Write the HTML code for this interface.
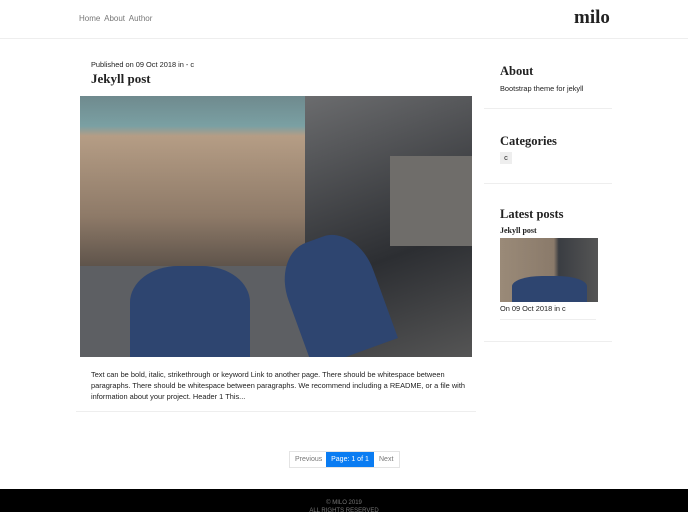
<!DOCTYPE html><html><head><style>
body{margin:0;width:688px;height:512px;overflow:hidden;background:#fff;font-family:"Liberation Sans",sans-serif;color:#222;position:relative}
.a{position:absolute}
.s{font-family:"Liberation Serif",serif;font-weight:bold}
.t{font-size:7.4px}
</style></head><body>
<div class="a t" style="left:79px;top:14px;color:#777;font-size:8px;word-spacing:2px">Home About Author</div>
<div class="a s" style="left:574px;top:7px;font-size:19px">milo</div>
<div class="a" style="left:0;top:38px;width:688px;height:1px;background:#eee"></div>
<div class="a t" style="left:91px;top:60px">Published on 09 Oct 2018 in - c</div>
<div class="a s" style="left:91px;top:71px;font-size:13px">Jekyll post</div>
<div class="a" style="left:80px;top:96px;width:392px;height:261px;overflow:hidden;background:#3a3d42">
 <div class="a" style="left:0;top:0;width:225px;height:175px;background:linear-gradient(180deg,#6f8a8e 0,#7aa0a3 30px,#b59d85 40px,#8e7a68 120px,#5a5048 175px)"></div>
 <div class="a" style="left:225px;top:0;width:167px;height:261px;background:linear-gradient(160deg,#6b6c6e,#2c2e32 60%,#555 100%)"></div>
 <div class="a" style="left:310px;top:60px;width:82px;height:90px;background:#6f6d6a"></div>
 <div class="a" style="left:0;top:170px;width:260px;height:91px;background:#5d5f63"></div>
 <div class="a" style="left:50px;top:170px;width:120px;height:91px;border-radius:40% 40% 0 0;background:#2e4570"></div>
 <div class="a" style="left:210px;top:140px;width:90px;height:121px;border-radius:40% 40% 0 0;background:#2e4570;transform:rotate(-20deg)"></div>
</div>
<div class="a t" style="left:91px;top:369px;width:380px;line-height:11px">Text can be bold, italic, strikethrough or keyword Link to another page. There should be whitespace between paragraphs. There should be whitespace between paragraphs. We recommend including a README, or a file with information about your project. Header 1 This...</div>
<div class="a" style="left:76px;top:411px;width:400px;height:1px;background:#eee"></div>
<div class="a" style="left:289px;top:451px;width:109px;height:15px;border:1px solid #e4e4e4;font-size:7px;line-height:15px">
 <span class="a" style="left:5px;color:#777">Previous</span>
 <span class="a" style="left:36px;top:0;width:48px;height:15px;background:#0a7cf2;color:#fff;text-align:center">Page: 1 of 1</span>
 <span class="a" style="left:89px;color:#777">Next</span></div>
<div class="a s" style="left:500px;top:64px;font-size:12.5px">About</div>
<div class="a t" style="left:500px;top:84px">Bootstrap theme for jekyll</div>
<div class="a" style="left:484px;top:108px;width:128px;height:1px;background:#eee"></div>
<div class="a s" style="left:500px;top:134px;font-size:12.5px">Categories</div>
<div class="a t" style="left:500px;top:152px;width:12px;height:12px;background:#eee;text-align:center;line-height:12px">c</div>
<div class="a" style="left:484px;top:183px;width:128px;height:1px;background:#eee"></div>
<div class="a s" style="left:500px;top:207px;font-size:12.5px">Latest posts</div>
<div class="a s" style="left:500px;top:226px;font-size:8px">Jekyll post</div>
<div class="a" style="left:500px;top:238px;width:98px;height:64px;background:linear-gradient(90deg,#9a8a78 0,#8a7a6a 55%,#3a3d42 60%,#555 100%)"><div class="a" style="left:12px;top:38px;width:75px;height:26px;border-radius:40% 40% 0 0;background:#2e4570"></div></div>
<div class="a t" style="left:500px;top:304px">On 09 Oct 2018 in c</div>
<div class="a" style="left:500px;top:319px;width:96px;height:1px;background:#eee"></div>
<div class="a" style="left:484px;top:341px;width:128px;height:1px;background:#eee"></div>
<div class="a" style="left:0;top:489px;width:688px;height:23px;background:#000;color:#777;font-size:6px;text-align:center;line-height:8px;padding-top:10px;box-sizing:border-box">© MILO 2019<br>ALL RIGHTS RESERVED</div>
</body></html>
